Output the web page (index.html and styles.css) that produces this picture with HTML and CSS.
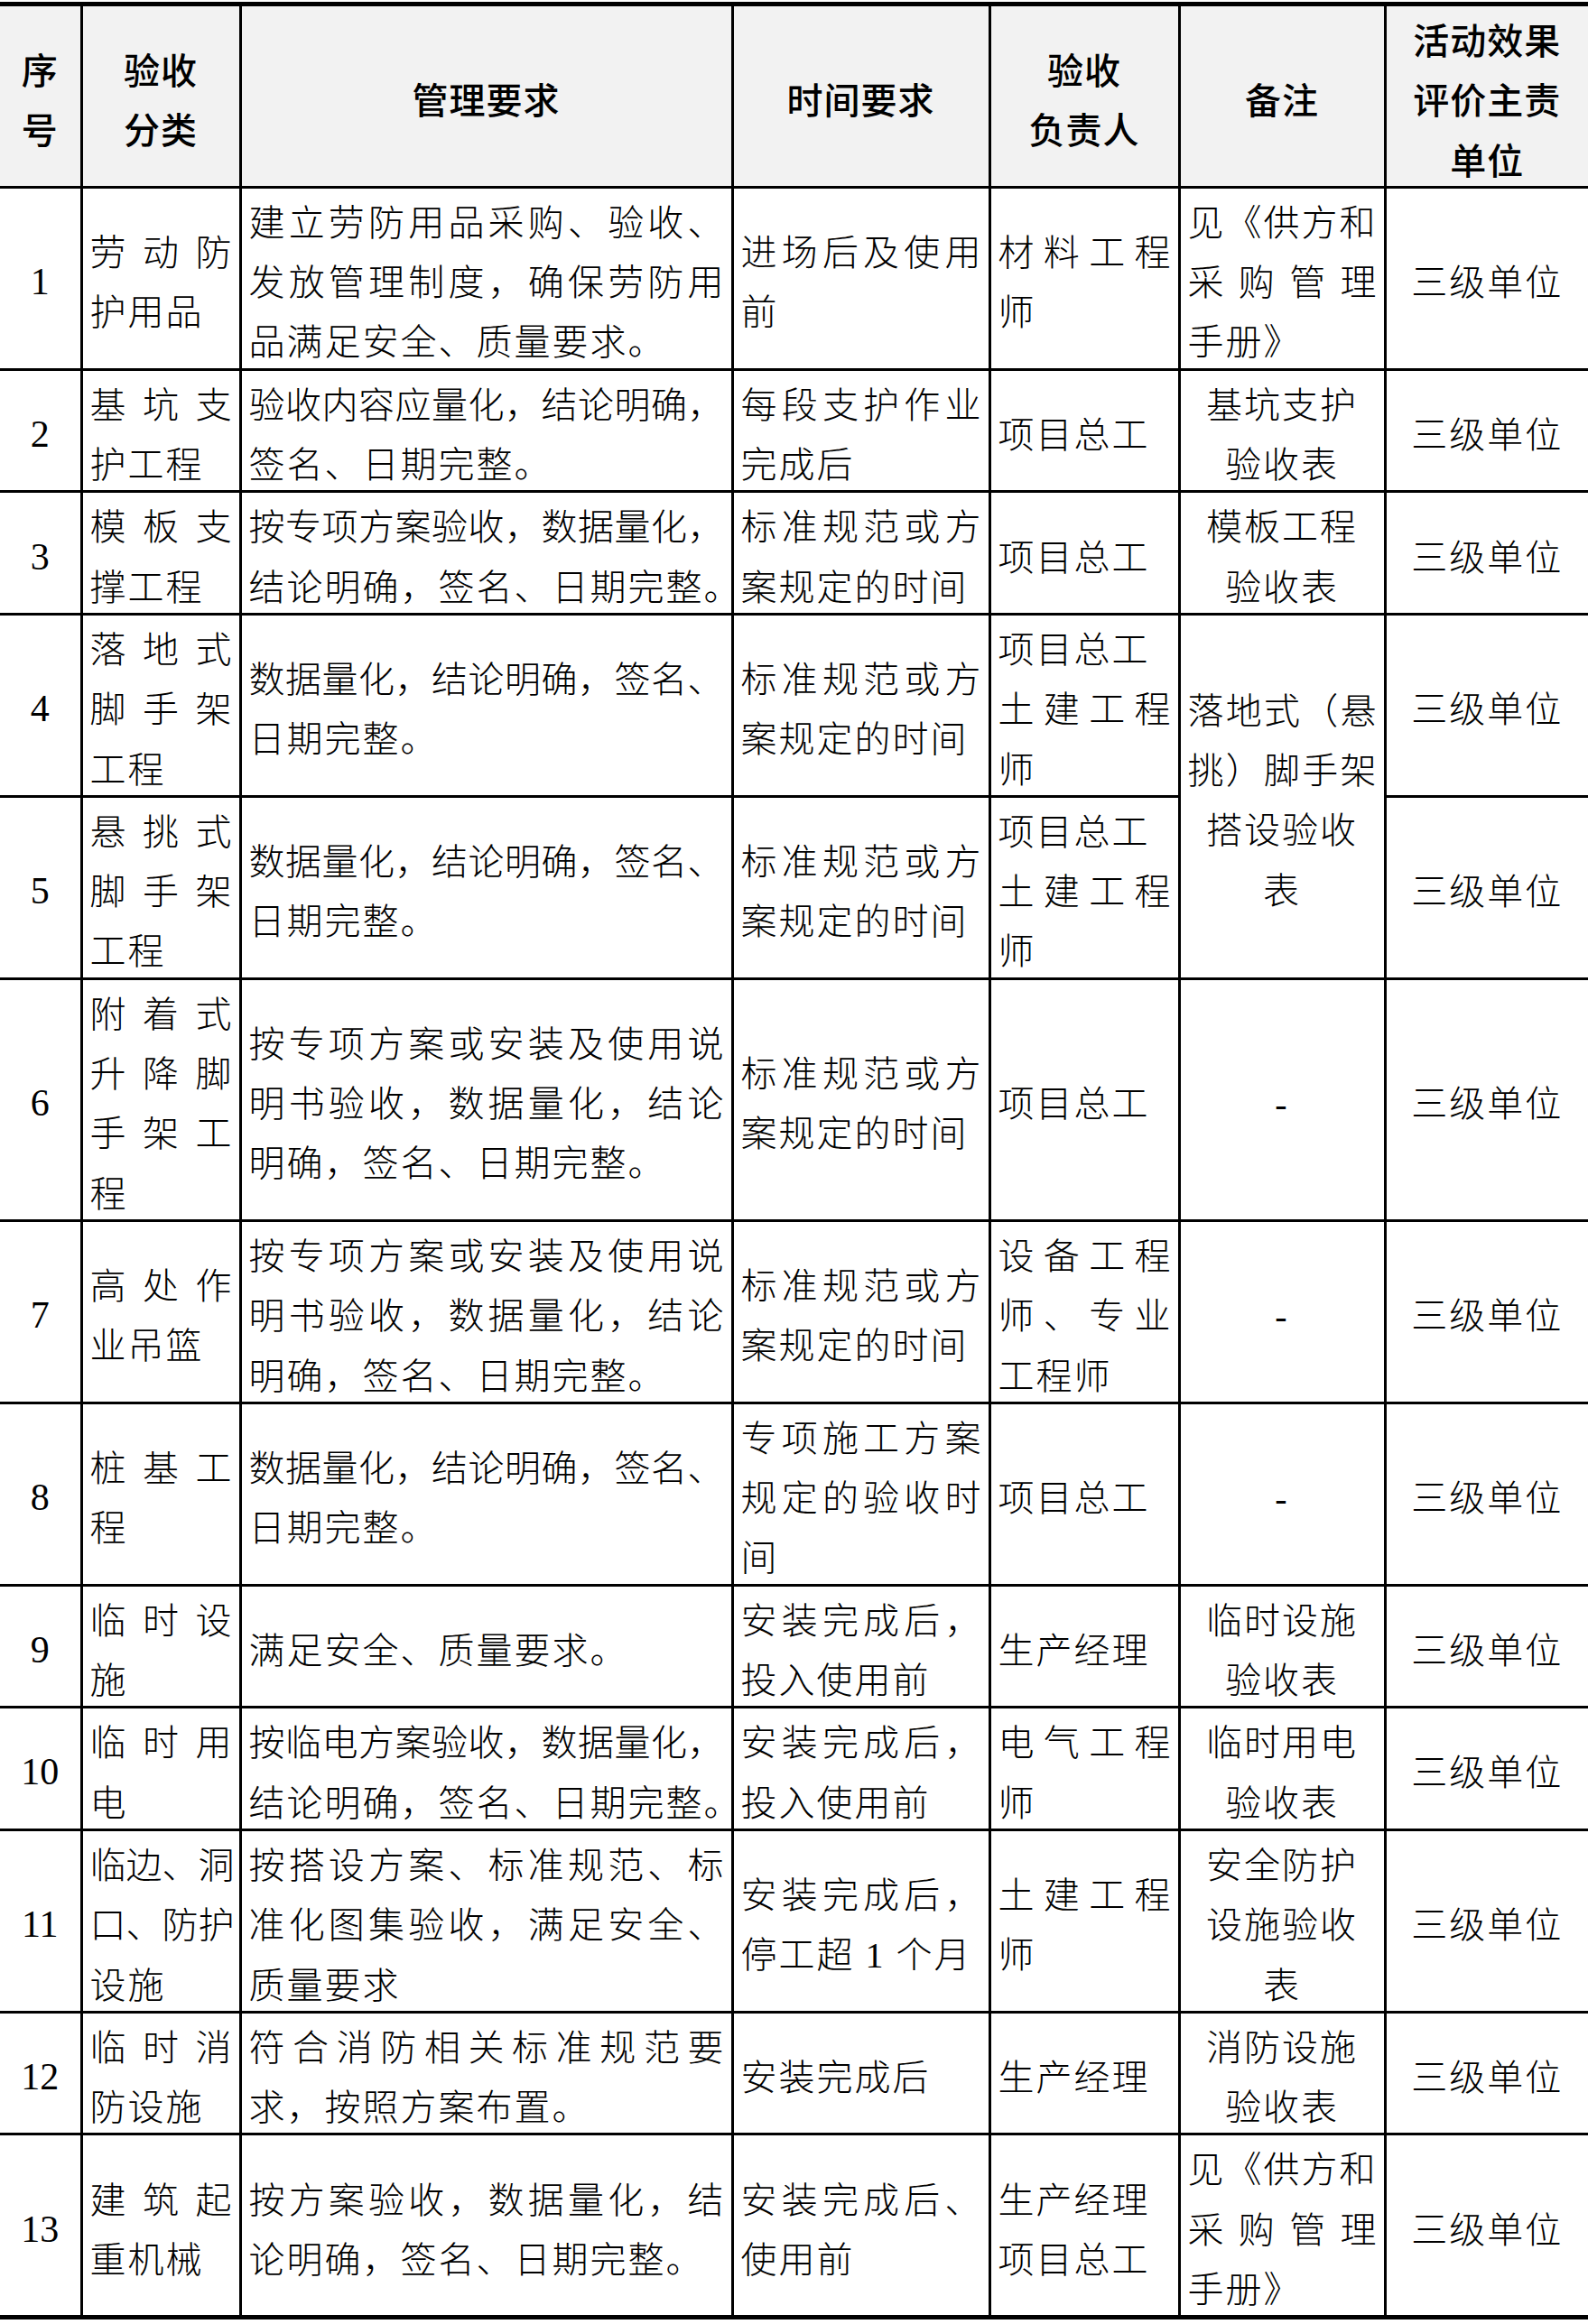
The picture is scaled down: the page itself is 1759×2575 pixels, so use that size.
FILE: index.html
```html
<!DOCTYPE html>
<html lang="zh-CN">
<head>
<meta charset="utf-8">
<title>验收管理表</title>
<link rel="stylesheet" href="styles.css">
</head>
<body>
<table class="t">
  <colgroup>
    <col class="c1"><col class="c2"><col class="c3"><col class="c4"><col class="c5"><col class="c6"><col class="c7">
  </colgroup>
  <thead>
    <tr>
      <th><span class="ln">序</span><span class="ln">号</span></th>
      <th><span class="ln">验收</span><span class="ln">分类</span></th>
      <th><span class="ln">管理要求</span></th>
      <th><span class="ln">时间要求</span></th>
      <th><span class="ln">验收</span><span class="ln">负责人</span></th>
      <th><span class="ln">备注</span></th>
      <th><span class="ln">活动效果</span><span class="ln">评价主责</span><span class="ln">单位</span></th>
    </tr>
  </thead>
  <tbody>
    <tr>
      <td class="n"><span class="ln">1</span></td>
      <td><span class="ln j">劳动防</span><span class="ln">护用品</span></td>
      <td><span class="ln j">建立劳防用品采购、验收、</span><span class="ln j">发放管理制度，确保劳防用</span><span class="ln">品满足安全、质量要求。</span></td>
      <td><span class="ln j">进场后及使用</span><span class="ln">前</span></td>
      <td><span class="ln j">材料工程</span><span class="ln">师</span></td>
      <td><span class="ln">见《供方和</span><span class="ln j">采购管理</span><span class="ln">手册》</span></td>
      <td class="c"><span class="ln">三级单位</span></td>
    </tr>
    <tr>
      <td class="n"><span class="ln">2</span></td>
      <td><span class="ln j">基坑支</span><span class="ln">护工程</span></td>
      <td><span class="ln j">验收内容应量化，结论明确，</span><span class="ln">签名、日期完整。</span></td>
      <td><span class="ln j">每段支护作业</span><span class="ln">完成后</span></td>
      <td><span class="ln">项目总工</span></td>
      <td class="c"><span class="ln">基坑支护</span><span class="ln">验收表</span></td>
      <td class="c"><span class="ln">三级单位</span></td>
    </tr>
    <tr>
      <td class="n"><span class="ln">3</span></td>
      <td><span class="ln j">模板支</span><span class="ln">撑工程</span></td>
      <td><span class="ln j">按专项方案验收，数据量化，</span><span class="ln">结论明确，签名、日期完整。</span></td>
      <td><span class="ln j">标准规范或方</span><span class="ln">案规定的时间</span></td>
      <td><span class="ln">项目总工</span></td>
      <td class="c"><span class="ln">模板工程</span><span class="ln">验收表</span></td>
      <td class="c"><span class="ln">三级单位</span></td>
    </tr>
    <tr>
      <td class="n"><span class="ln">4</span></td>
      <td><span class="ln j">落地式</span><span class="ln j">脚手架</span><span class="ln">工程</span></td>
      <td><span class="ln j">数据量化，结论明确，签名、</span><span class="ln">日期完整。</span></td>
      <td><span class="ln j">标准规范或方</span><span class="ln">案规定的时间</span></td>
      <td><span class="ln">项目总工</span><span class="ln j">土建工程</span><span class="ln">师</span></td>
      <td class="c" rowspan="2"><span class="ln j">落地式（悬</span><span class="ln j">挑）脚手架</span><span class="ln">搭设验收</span><span class="ln">表</span></td>
      <td class="c"><span class="ln">三级单位</span></td>
    </tr>
    <tr>
      <td class="n"><span class="ln">5</span></td>
      <td><span class="ln j">悬挑式</span><span class="ln j">脚手架</span><span class="ln">工程</span></td>
      <td><span class="ln j">数据量化，结论明确，签名、</span><span class="ln">日期完整。</span></td>
      <td><span class="ln j">标准规范或方</span><span class="ln">案规定的时间</span></td>
      <td><span class="ln">项目总工</span><span class="ln j">土建工程</span><span class="ln">师</span></td>
      <td class="c"><span class="ln">三级单位</span></td>
    </tr>
    <tr>
      <td class="n"><span class="ln">6</span></td>
      <td><span class="ln j">附着式</span><span class="ln j">升降脚</span><span class="ln j">手架工</span><span class="ln">程</span></td>
      <td><span class="ln j">按专项方案或安装及使用说</span><span class="ln j">明书验收，数据量化，结论</span><span class="ln">明确，签名、日期完整。</span></td>
      <td><span class="ln j">标准规范或方</span><span class="ln">案规定的时间</span></td>
      <td><span class="ln">项目总工</span></td>
      <td class="c"><span class="ln">-</span></td>
      <td class="c"><span class="ln">三级单位</span></td>
    </tr>
    <tr>
      <td class="n"><span class="ln">7</span></td>
      <td><span class="ln j">高处作</span><span class="ln">业吊篮</span></td>
      <td><span class="ln j">按专项方案或安装及使用说</span><span class="ln j">明书验收，数据量化，结论</span><span class="ln">明确，签名、日期完整。</span></td>
      <td><span class="ln j">标准规范或方</span><span class="ln">案规定的时间</span></td>
      <td><span class="ln j">设备工程</span><span class="ln j">师、专业</span><span class="ln">工程师</span></td>
      <td class="c"><span class="ln">-</span></td>
      <td class="c"><span class="ln">三级单位</span></td>
    </tr>
    <tr>
      <td class="n"><span class="ln">8</span></td>
      <td><span class="ln j">桩基工</span><span class="ln">程</span></td>
      <td><span class="ln j">数据量化，结论明确，签名、</span><span class="ln">日期完整。</span></td>
      <td><span class="ln j">专项施工方案</span><span class="ln j">规定的验收时</span><span class="ln">间</span></td>
      <td><span class="ln">项目总工</span></td>
      <td class="c"><span class="ln">-</span></td>
      <td class="c"><span class="ln">三级单位</span></td>
    </tr>
    <tr>
      <td class="n"><span class="ln">9</span></td>
      <td><span class="ln j">临时设</span><span class="ln">施</span></td>
      <td><span class="ln">满足安全、质量要求。</span></td>
      <td><span class="ln j">安装完成后，</span><span class="ln">投入使用前</span></td>
      <td><span class="ln">生产经理</span></td>
      <td class="c"><span class="ln">临时设施</span><span class="ln">验收表</span></td>
      <td class="c"><span class="ln">三级单位</span></td>
    </tr>
    <tr>
      <td class="n"><span class="ln">10</span></td>
      <td><span class="ln j">临时用</span><span class="ln">电</span></td>
      <td><span class="ln j">按临电方案验收，数据量化，</span><span class="ln">结论明确，签名、日期完整。</span></td>
      <td><span class="ln j">安装完成后，</span><span class="ln">投入使用前</span></td>
      <td><span class="ln j">电气工程</span><span class="ln">师</span></td>
      <td class="c"><span class="ln">临时用电</span><span class="ln">验收表</span></td>
      <td class="c"><span class="ln">三级单位</span></td>
    </tr>
    <tr>
      <td class="n"><span class="ln">11</span></td>
      <td><span class="ln j">临边、洞</span><span class="ln j">口、防护</span><span class="ln">设施</span></td>
      <td><span class="ln j">按搭设方案、标准规范、标</span><span class="ln j">准化图集验收，满足安全、</span><span class="ln">质量要求</span></td>
      <td><span class="ln j">安装完成后，</span><span class="ln">停工超 1 个月</span></td>
      <td><span class="ln j">土建工程</span><span class="ln">师</span></td>
      <td class="c"><span class="ln">安全防护</span><span class="ln">设施验收</span><span class="ln">表</span></td>
      <td class="c"><span class="ln">三级单位</span></td>
    </tr>
    <tr>
      <td class="n"><span class="ln">12</span></td>
      <td><span class="ln j">临时消</span><span class="ln">防设施</span></td>
      <td><span class="ln j">符合消防相关标准规范要</span><span class="ln">求，按照方案布置。</span></td>
      <td><span class="ln">安装完成后</span></td>
      <td><span class="ln">生产经理</span></td>
      <td class="c"><span class="ln">消防设施</span><span class="ln">验收表</span></td>
      <td class="c"><span class="ln">三级单位</span></td>
    </tr>
    <tr>
      <td class="n"><span class="ln">13</span></td>
      <td><span class="ln j">建筑起</span><span class="ln">重机械</span></td>
      <td><span class="ln j">按方案验收，数据量化，结</span><span class="ln">论明确，签名、日期完整。</span></td>
      <td><span class="ln j">安装完成后、</span><span class="ln">使用前</span></td>
      <td><span class="ln">生产经理</span><span class="ln">项目总工</span></td>
      <td><span class="ln">见《供方和</span><span class="ln j">采购管理</span><span class="ln">手册》</span></td>
      <td class="c"><span class="ln">三级单位</span></td>
    </tr>
  </tbody>
</table>
</body>
</html>
```

FILE: styles.css
```css
html, body {
  margin: 0;
  padding: 0;
  background: #ffffff;
}

body {
  padding-top: 2px;
}

.t {
  width: 1759px;
  border-collapse: collapse;
  table-layout: fixed;
  font-family: "Liberation Serif", "Noto Sans CJK SC", serif;
  font-weight: 300;
  font-size: 40px;
  line-height: 66.3px;
  letter-spacing: 2px;
  color: #000000;
}

.c1 { width: 90px; }
.c2 { width: 176px; }
.c3 { width: 545px; }
.c4 { width: 285px; }
.c5 { width: 210px; }
.c6 { width: 228px; }
.c7 { width: 225px; }

.t th,
.t td {
  border: 3px solid #000000;
  padding: 0 8px;
  vertical-align: middle;
  text-align: left;
  overflow: visible;
}

.t th {
  background: #f2f2f2;
  font-family: "Noto Sans CJK SC", sans-serif;
  font-weight: 500;
  text-align: center;
  letter-spacing: 1px;
}

.t thead tr th {
  border-top: 5px solid #000000;
}

.t tbody tr:last-child td {
  border-bottom: 5px solid #000000;
}

.t tr > :first-child {
  border-left: none;
}

.t tr > :last-child {
  border-right: none;
}

.t td.n {
  text-align: center;
  font-family: "Liberation Serif", serif;
  font-weight: 400;
  font-size: 42px;
  letter-spacing: 0;
  padding: 0;
}

.t td.c {
  text-align: center;
}

/* each visual line; the padding/negative margin pair lowers the glyphs
   a little inside the line without changing the flow height */
.ln {
  display: block;
  white-space: nowrap;
  padding-top: 6px;
  margin-bottom: -6px;
}

.t th .ln {
  padding-top: 3px;
  margin-bottom: -3px;
}

.t td.n .ln {
  padding-top: 4px;
  margin-bottom: -4px;
}

.j {
  text-align: justify;
  text-align-last: justify;
  letter-spacing: 0;
}
```
